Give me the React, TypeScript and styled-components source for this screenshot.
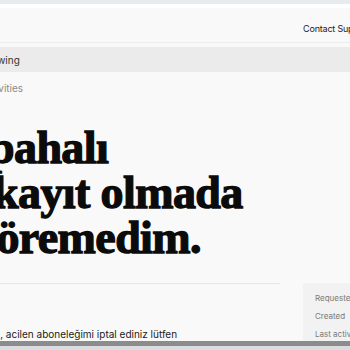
import React from "react";
import styled, { createGlobalStyle } from "styled-components";

const GlobalStyle = createGlobalStyle`
  html, body {
    margin: 0;
    padding: 0;
    background: #f9f9f9;
    overflow: hidden;
  }
  body {
    font-family: "Inter", "Liberation Sans", sans-serif;
  }
`;

const Page = styled.div`
  width: 350px;
  height: 350px;
  display: flex;
  flex-direction: column;
  overflow: hidden;
  background: #f9f9f9;
`;

const TopBand = styled.div`
  height: 4px;
  background: #e7ebee;
  border-bottom: 4px solid #ffffff;
`;

const Header = styled.header`
  height: 33px;
  display: flex;
  justify-content: flex-end;
  align-items: center;
  border-bottom: 1px solid #ebebeb;
  background: #f9f9f9;
  margin-top: 1px;
`;

const HeaderLink = styled.span`
  font-size: 9px;
  letter-spacing: -0.2px;
  color: #222;
  white-space: nowrap;
  margin-right: -20px;
  padding-top: 6px;
`;

const TabBar = styled.div`
  margin-top: 4px;
  height: 25px;
  background: #ebebeb;
  display: flex;
  align-items: center;
`;

const Tab = styled.span<{ $muted?: boolean }>`
  font-size: 10px;
  color: ${(p) => (p.$muted ? "#8a8a8a" : "#333")};
  margin-left: ${(p) => (p.$muted ? -20 : -25)}px;
  white-space: nowrap;
`;

const SubNav = styled.div`
  height: 32px;
  display: flex;
  align-items: center;
`;

const Headline = styled.h1`
  margin: 21px 0 0;
  font-family: "Liberation Serif", serif;
  font-weight: 700;
  font-size: 46px;
  line-height: 45px;
  letter-spacing: -0.6px;
  -webkit-text-stroke: 1.3px #0b0b0b;
  color: #0b0b0b;
  white-space: nowrap;
`;

const Line = styled.span<{ $shift: number }>`
  display: block;
  margin-left: ${(p) => p.$shift}px;
`;

const Lower = styled.div`
  margin-top: 23px;
  flex: 1;
  display: flex;
  gap: 23px;
`;

const Main = styled.div`
  width: 280px;
  flex-shrink: 0;
  border-top: 1px solid #e6e6e6;
  display: flex;
  flex-direction: column;
  justify-content: flex-end;
  padding-bottom: 1px;
`;

const Message = styled.p`
  margin: 0 0 0 -42px;
  font-size: 10px;
  line-height: 12px;
  color: #1a1a1a;
  white-space: nowrap;
`;

const Sidebar = styled.aside`
  flex: 1;
  min-width: 0;
  overflow: hidden;
  background: #f2f2f2;
  padding: 10px 0 0 12px;
  display: flex;
  flex-direction: column;
  gap: 8px;
`;

const Meta = styled.span`
  font-size: 8px;
  line-height: 10px;
  color: #7a7a7a;
  white-space: nowrap;
`;

const ScrollBar = styled.div`
  height: 5px;
  background: #8c8c8c;
  border-bottom: 4px solid #dadde0;
`;

export default function App() {
  return (
    <>
      <GlobalStyle />
      <Page>
        <TopBand />
        <Header>
          <HeaderLink>Contact Support</HeaderLink>
        </Header>
        <TabBar>
          <Tab>Following</Tab>
        </TabBar>
        <SubNav>
          <Tab $muted>Activities</Tab>
        </SubNav>
        <Headline>
          <Line $shift={-11}>pahalı</Line>
          <Line $shift={-7}>kayıt olmada</Line>
          <Line $shift={-26}>göremedim.</Line>
        </Headline>
        <Lower>
          <Main>
            <Message>Merhaba, acilen aboneleğimi iptal ediniz lütfen</Message>
          </Main>
          <Sidebar>
            <Meta>Requester</Meta>
            <Meta>Created</Meta>
            <Meta>Last activity</Meta>
          </Sidebar>
        </Lower>
        <ScrollBar />
      </Page>
    </>
  );
}
